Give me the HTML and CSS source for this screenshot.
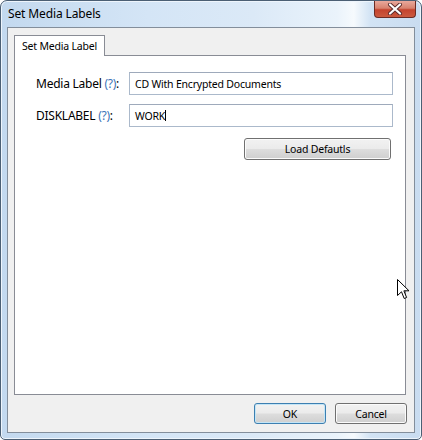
FILE: index.html
```html
<!DOCTYPE html>
<html lang="en">
<head>
    <meta charset="UTF-8">
    <title>Set Media Labels</title>
    <link rel="stylesheet" href="styles.css">
</head>
<body>

<div class="window">
    <div class="titlebar">
        <span class="title">Set Media Labels</span>
        <div class="close">
            <svg width="16" height="12" viewBox="0 0 16 12">
                <path d="M3 1.5 L13 10.5 M13 1.5 L3 10.5" stroke="#5a2a2a" stroke-width="4" stroke-linecap="round"/>
                <path d="M3 1.5 L13 10.5 M13 1.5 L3 10.5" stroke="#ffffff" stroke-width="2.2" stroke-linecap="round"/>
            </svg>
        </div>
    </div>

    <div class="client">
        <div class="tabs">
            <div class="tab">Set Media Label</div>
        </div>

        <div class="panel">
            <div class="form">
                <label>Media Label <span class="help">(?)</span>:</label>
                <div class="field">CD With Encrypted Documents</div>

                <label>DISKLABEL <span class="help">(?)</span>:</label>
                <div class="field">WORK<span class="caret"></span></div>
            </div>
            <div class="actions">
                <button class="btn wide">Load Defautls</button>
            </div>
        </div>

        <div class="footer">
            <button class="btn default">OK</button>
            <button class="btn">Cancel</button>
        </div>
    </div>

    <!-- puntero del mouse -->
    <svg class="pointer" width="13" height="21" viewBox="0 0 13 21">
        <path d="M0.5 0.5 L0.5 16.5 L4.5 12.8 L7.2 19.5 L9.6 18.5 L6.9 11.8 L12 11.8 Z" fill="#fff" stroke="#000" stroke-width="1" stroke-linejoin="miter"/>
    </svg>
</div>

</body>
</html>
```

FILE: styles.css
```css
body {
    margin: 0;
    font-family: "Noto Sans", "Open Sans", sans-serif;
    font-size: 10.5px;
    letter-spacing: -0.2px;
    color: #000;
    background: #fff;
}
.window {
    position: relative;
    width: 422px;
    height: 440px;
    box-sizing: border-box;
    border: 1px solid #4b5f74;
    border-radius: 7px 7px 5px 5px;
    padding: 0 6px 6px 6px;
    background: linear-gradient(90deg, #c3d9ef 0%, #d4e5f6 35%, #dbe9f7 60%, #eaf3fb 80%, #f6fafd 84%, #d2e3f4 88%, #c9dcf0 100%);
    box-shadow: inset 0 0 0 1px #eef5fc;
}
.titlebar {
    height: 26px;
    display: flex;
    justify-content: space-between;
    align-items: flex-start;
}
.title {
    margin: 5px 0 0 1px;
    font-size: 12px;
    letter-spacing: -0.13px;
    line-height: 16px;
    color: #000;
}
.close {
    width: 42px;
    height: 17px;
    margin-right: -1px;
    box-sizing: border-box;
    border: 1px solid #6b2b24;
    border-top: none;
    border-radius: 0 0 4px 4px;
    background: linear-gradient(180deg, #e9a99c 0%, #d7826f 45%, #c4432e 55%, #cb5a3f 100%);
    display: flex;
    align-items: center;
    justify-content: center;
}
.client {
    height: 406px;
    box-sizing: border-box;
    border: 1px solid #838e9b;
    background: #f0f0f0;
    padding: 7px 8px 0 6px;
}
.tabs {
    display: flex;
    height: 20px;
}
.tab {
    position: relative;
    z-index: 1;
    width: 91px;
    height: 21px;
    box-sizing: border-box;
    border: 1px solid #898c95;
    border-bottom: none;
    background: #fff;
    padding: 2px 0 0 7px;
    line-height: 16px;
    white-space: nowrap;
}
.panel {
    height: 340px;
    box-sizing: border-box;
    border: 1px solid #898c95;
    background: #fff;
    padding: 16px 12px 0 21px;
}
.form {
    display: grid;
    grid-template-columns: 93px 1fr;
    row-gap: 9px;
    align-items: center;
}
.form label {
    font-size: 12px;
    letter-spacing: -0.25px;
}
.help {
    color: #3c74b8;
}
.field {
    height: 23px;
    box-sizing: border-box;
    border: 1px solid #abb9cb;
    border-top-color: #9eaabb;
    padding: 0 5px;
    line-height: 20px;
    display: flex;
    align-items: center;
}
.caret {
    display: inline-block;
    width: 1px;
    height: 11px;
    background: #000;
}
.actions {
    display: flex;
    justify-content: flex-end;
    padding: 11px 2px 0 0;
}
.btn {
    font-family: inherit;
    font-size: 10.5px;
    letter-spacing: -0.2px;
    color: #000;
    width: 72px;
    height: 21px;
    padding: 0;
    border: 1px solid #707070;
    border-radius: 3px;
    background: linear-gradient(180deg, #f2f2f2 0%, #ebebeb 48%, #dddddd 52%, #cfcfcf 100%);
    box-shadow: inset 0 0 0 1px #fbfbfb;
}
.btn.wide {
    width: 147px;
    height: 22px;
}
.btn.default {
    border-color: #3c7fb1;
    box-shadow: inset 0 0 0 1px #c4e5f6;
}
.footer {
    display: flex;
    justify-content: flex-end;
    gap: 9px;
    padding: 8px 7px 0 0;
    margin-right: -8px;
}
.pointer {
    position: absolute;
    left: 396px;
    top: 278px;
}
```
